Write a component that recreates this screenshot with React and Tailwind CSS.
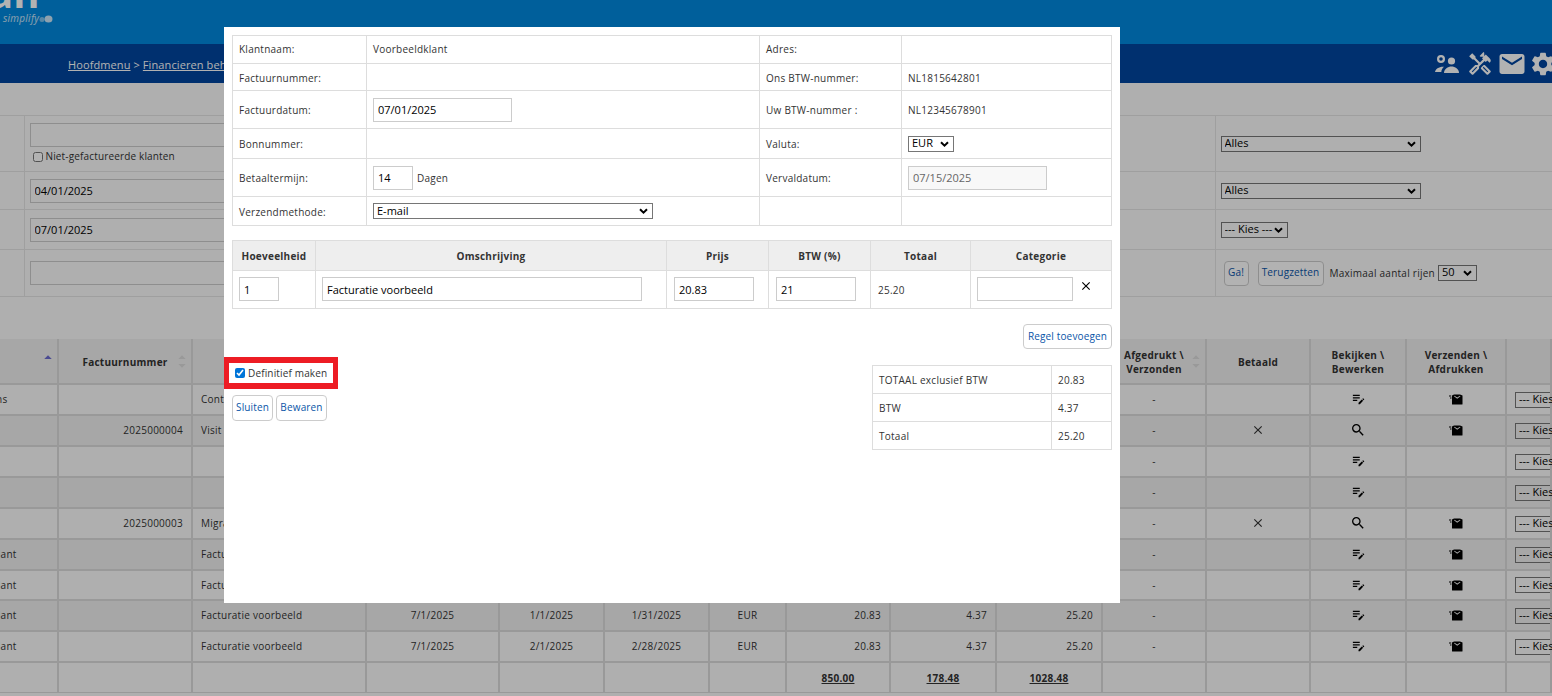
import React from 'react';
import { MdOutlineHandyman, MdEmail, MdSettings, MdEditNote, MdSearch, MdClose, MdArrowDropUp, MdArrowDropDown } from 'react-icons/md';

const font = { fontFamily: '"Open Sans", sans-serif' };

const rows = [
  { klant: 'Klant Jansens', nr: '', oms: 'Contract maart', d1: '7/1/2025', d2: '3/1/2025', d3: '3/31/2025', ex: '20.83', btw: '4.37', tot: '25.20', paid: false, view: 'edit', mail: true },
  { klant: '', nr: '2025000004', oms: 'Visit rapport', d1: '7/1/2025', d2: '6/1/2025', d3: '6/30/2025', ex: '100.00', btw: '21.00', tot: '121.00', paid: true, view: 'search', mail: true },
  { klant: '', nr: '', oms: '', d1: '', d2: '', d3: '', ex: '', btw: '', tot: '', paid: false, view: 'edit', mail: false },
  { klant: '', nr: '', oms: '', d1: '', d2: '', d3: '', ex: '', btw: '', tot: '', paid: false, view: 'edit', mail: false },
  { klant: '', nr: '2025000003', oms: 'Migratie', d1: '7/1/2025', d2: '5/1/2025', d3: '5/31/2025', ex: '100.00', btw: '21.00', tot: '121.00', paid: true, view: 'search', mail: true },
  { klant: 'Voorbeeldklant', nr: '', oms: 'Facturatie voorbeeld', d1: '7/1/2025', d2: '11/1/2024', d3: '11/30/2024', ex: '20.83', btw: '4.37', tot: '25.20', paid: false, view: 'edit', mail: true },
  { klant: 'Voorbeeldklant', nr: '', oms: 'Facturatie voorbeeld', d1: '7/1/2025', d2: '12/1/2024', d3: '12/31/2024', ex: '20.83', btw: '4.37', tot: '25.20', paid: false, view: 'edit', mail: true },
  { klant: 'Voorbeeldklant', nr: '', oms: 'Facturatie voorbeeld', d1: '7/1/2025', d2: '1/1/2025', d3: '1/31/2025', ex: '20.83', btw: '4.37', tot: '25.20', paid: false, view: 'edit', mail: true },
  { klant: 'Voorbeeldklant', nr: '', oms: 'Facturatie voorbeeld', d1: '7/1/2025', d2: '2/1/2025', d3: '2/28/2025', ex: '20.83', btw: '4.37', tot: '25.20', paid: false, view: 'edit', mail: true },
];

const UsersIcon = () => (
  <svg width="26" height="20" viewBox="0 0 26 20" fill="currentColor">
    <path fillRule="evenodd" d="M7 1a4 4 0 1 1 0 8 4 4 0 0 1 0-8zm0 2.200a1.800 1.800 0 1 0 0 3.600 1.800 1.800 0 0 0 0-3.600z" />
    <circle cx="17.500" cy="7" r="3.600" />
    <path d="M10 19c0-4 4-6.500 7.500-6.500S25 15 25 19H10z" />
    <path d="M1 18c.5-3 4-5.500 9-5.200-1.500 1-2.500 3-2.700 5.200H1z" />
  </svg>
);

const MailOpenIcon = () => (
  <svg width="14" height="11" viewBox="0 0 14 11" fill="currentColor">
    <path d="M3 1.500 5 .5h6l2.500 1v8.500a.5.500 0 0 1-.5.500H3.500a.5.500 0 0 1-.5-.500V1.500zm2 .8 3.200 2.400 3.300-2.400-.6-.6-2.700 1.800-2.600-1.800-.6.600z" />
    <rect x="0" y="1.500" width="2.200" height="1" />
    <rect x="1" y="3.500" width="1.500" height="1" />
  </svg>
);

const Bubbles = () => (
  <svg width="14" height="8" viewBox="0 0 14 8" fill="currentColor" className="mt-[2px]">
    <circle cx="3" cy="4.500" r="2.500" fillOpacity="0.6" />
    <ellipse cx="9.500" cy="4" rx="4" ry="3.500" />
  </svg>
);

const Sort = ({ active }) => (
  <span className="absolute right-0 top-1/2 flex -translate-y-1/2 flex-col pt-[1px] text-[#dcdcdc]">
    <MdArrowDropUp size={18} className={active ? 'text-[#6c6cd0] -mb-[10px]' : '-mb-[10px]'} />
    {!active && <MdArrowDropDown size={18} />}
    {active && <span className="h-[18px]" />}
  </span>
);

const Input = ({ value, className = 'text-black', readOnly = false }) => (
  <input
    defaultValue={value}
    readOnly={readOnly}
    className={`h-[24px] border border-[#ccc] px-[4px] text-[11px] tracking-normal ${className}`}
  />
);

// native select, chevron drawn so the text can sit a little higher
const Sel = ({ children, className = '' }) => (
  <div className={`flex h-[16px] items-center overflow-hidden border border-[#767676] ${className}`}>
    <select className="-mt-[2px] h-[15px] w-full appearance-none bg-transparent pl-[3px] text-[11px] tracking-normal text-black">
      <option>{children}</option>
    </select>
    <svg width="9" height="6" viewBox="0 0 9 6" className="pointer-events-none mr-[4px] -ml-[13px] shrink-0 text-black">
      <path d="M1 1.200 4.500 4.600 8 1.200" fill="none" stroke="currentColor" strokeWidth="2" />
    </svg>
  </div>
);

const Btn = ({ children, className = '' }) => (
  <button className={`rounded-[4px] border border-[#ccc] bg-white px-[3px] pb-[1px] text-[10px] tracking-[0.15px] text-[#0a55a8] ${className}`}>
    {children}
  </button>
);

const cell = 'border border-[#ddd] px-[6px] align-middle';
const labelTd = `${cell} pt-[2px]`;
const headTd = 'border-x-2 border-[#dcdcdc] pt-[2px]';
const dataTd = 'border border-[#ddd]';

export default function App() {
  return (
    <div style={font} className="relative h-[696px] w-[1552px] overflow-hidden bg-[#fbfbfb] text-[10px] tracking-[0.25px] text-[#333]">
      {/* header */}
      <div className="h-[44px] overflow-hidden bg-[#0089df]">
        <div className="-mt-[27px] -ml-[11px] text-[40px] leading-[40px] font-bold tracking-normal text-white">an</div>
        <div className="-mt-[1px] ml-[3px] flex items-center text-[10px] leading-[12px] text-white/80 italic">
          simplify
          <Bubbles />
        </div>
      </div>
      <div className="flex h-[39px] items-center justify-between bg-[#0045a0] pl-[68px] text-white">
        <div className="pt-[3px] text-[11px] tracking-[0.1px]">
          <span className="underline">Hoofdmenu</span> &gt; <span className="underline">Financieren beheren</span>
        </div>
        <div className="-mr-[5px] flex items-center">
          <UsersIcon />
          <MdOutlineHandyman size={26} className="ml-[7px]" />
          <MdEmail size={30} className="ml-[4px]" />
          <MdSettings size={28} className="ml-[2px]" />
        </div>
      </div>

      {/* filters */}
      <table className="mt-[32px] w-full table-fixed border-collapse text-[10px]">
        <colgroup>
          <col className="w-[24px]" />
          <col className="w-[1191px]" />
          <col />
        </colgroup>
        <tbody>
          <tr className="h-[56px] border-y border-[#e4e4e4]">
            <td className="border-r border-[#e4e4e4]" />
            <td className="border-r border-[#e4e4e4] px-[5px] pt-[7px] align-top">
              <Input value="" className="block w-[300px]" />
              <label className="mt-[2px] flex items-center gap-[3px] pl-[3px] tracking-[0.15px]">
                <input type="checkbox" className="h-[10px] w-[10px]" />
                Niet-gefactureerde klanten
              </label>
            </td>
            <td className="px-[5px]"><Sel className="w-[200px]">Alles</Sel></td>
          </tr>
          <tr className="h-[38px] border-b border-[#e4e4e4]">
            <td className="border-r border-[#e4e4e4]" />
            <td className="border-r border-[#e4e4e4] px-[5px]"><Input value="04/01/2025" className="block w-[300px] text-black" /></td>
            <td className="px-[5px]"><Sel className="w-[200px]">Alles</Sel></td>
          </tr>
          <tr className="h-[40px] border-b border-[#e4e4e4]">
            <td className="border-r border-[#e4e4e4]" />
            <td className="border-r border-[#e4e4e4] px-[5px]"><Input value="07/01/2025" className="block w-[300px] text-black" /></td>
            <td className="px-[5px]"><Sel className="w-[67px]">--- Kies ---</Sel></td>
          </tr>
          <tr className="h-[47px] border-b border-[#e4e4e4]">
            <td className="border-r border-[#e4e4e4]" />
            <td className="border-r border-[#e4e4e4] px-[5px]"><Input value="" className="block w-[300px]" /></td>
            <td className="pl-[8px]">
              <div className="flex items-center">
                <Btn className="h-[25px] w-[25px] bg-transparent">Ga!</Btn>
                <Btn className="ml-[9px] h-[25px] w-[66px] bg-transparent">Terugzetten</Btn>
                <span className="ml-[6px]">Maximaal aantal rijen</span>
                <Sel className="-mt-[1px] ml-[3px] w-[39px]">50</Sel>
              </div>
            </td>
          </tr>
        </tbody>
      </table>

      {/* results, scrolled a bit to the right */}
      <div className="mt-[42px] overflow-hidden">
        <table className="-ml-[101px] w-[1653px] table-fixed border-collapse text-[10px]">
          <colgroup>
            {[158, 134, 174, 133, 105, 105, 77, 104, 106, 106, 104, 104, 96, 100].map((w, i) => (
              <col key={i} style={{ width: w }} />
            ))}
            <col />
          </colgroup>
          <thead>
            <tr className="h-[45px] border-b-2 border-b-black bg-[#f0f0f0] text-center font-bold">
              <th className={`relative ${headTd}`}><Sort active /></th>
              <th className={`relative ${headTd}`}>Factuurnummer<Sort /></th>
              {['Omschrijving', 'Factuurdatum', 'Van', 'Tot', 'Valuta', 'Excl.', 'BTW', 'Totaal'].map((h) => (
                <th key={h} className={headTd}>{h}</th>
              ))}
              <th className={`relative leading-[14px] ${headTd}`}>Afgedrukt \<br />Verzonden<Sort /></th>
              <th className={headTd}>Betaald</th>
              <th className={`leading-[14px] ${headTd}`}>Bekijken \<br />Bewerken</th>
              <th className={`leading-[14px] ${headTd}`}>Verzenden \<br />Afdrukken</th>
              <th className={headTd} />
            </tr>
          </thead>
          <tbody>
            {rows.map((r, i) => (
              <tr key={i} className={`${i === 6 ? 'h-[30px]' : 'h-[31px]'} ${i % 2 ? 'bg-[#f0f0f0]' : 'bg-[#fbfbfb]'}`}>
                <td className="border-2 border-[#dcdcdc] pl-[41px] whitespace-nowrap">{r.klant}</td>
                <td className="border-2 border-[#dcdcdc] px-[8px] text-right">{r.nr}</td>
                <td className="border-2 border-[#dcdcdc] px-[8px] whitespace-nowrap">{r.oms}</td>
                <td className="border-2 border-[#dcdcdc] text-center">{r.d1}</td>
                <td className="border-2 border-[#dcdcdc] text-center">{r.d2}</td>
                <td className="border-2 border-[#dcdcdc] text-center">{r.d3}</td>
                <td className="border-2 border-[#dcdcdc] text-center">{r.ex && 'EUR'}</td>
                <td className="border-2 border-[#dcdcdc] px-[8px] text-right">{r.ex}</td>
                <td className="border-2 border-[#dcdcdc] px-[8px] text-right">{r.btw}</td>
                <td className="border-2 border-[#dcdcdc] px-[8px] text-right">{r.tot}</td>
                <td className="border-2 border-[#dcdcdc] text-center">-</td>
                <td className="border-2 border-[#dcdcdc]">{r.paid && <MdClose size={14} className="mx-auto -translate-y-[1px]" />}</td>
                <td className="border-2 border-[#dcdcdc]">
                  {r.view === 'edit'
                    ? <MdEditNote size={15} className="mx-auto -translate-y-[1px] text-black" />
                    : <MdSearch size={16} className="mx-auto -translate-y-[1px] text-black" />}
                </td>
                <td className="border-2 border-[#dcdcdc] text-black">
                  {r.mail && <div className="flex justify-center"><MailOpenIcon /></div>}
                </td>
                <td className="border-2 border-[#dcdcdc] pl-[8px] whitespace-nowrap"><Sel className="w-[67px]">--- Kies ---</Sel></td>
              </tr>
            ))}
            <tr className="h-[30px] border-t-2 border-b border-t-black border-b-[#dcdcdc] text-center font-bold">
              {Array.from({ length: 15 }).map((_, i) => {
                const totals = { 7: '850.00', 8: '178.48', 9: '1028.48' };
                return (
                  <td key={i} className="border-x-2 border-[#dcdcdc] pt-[3px] underline">{totals[i]}</td>
                );
              })}
            </tr>
          </tbody>
        </table>
      </div>

      {/* dim layer */}
      <div className="absolute inset-0 bg-black/30" />

      {/* invoice dialog */}
      <div className="absolute top-[27px] left-[224px] h-[576px] w-[896px] bg-white p-[8px]">
        <table className="w-[880px] table-fixed border-collapse">
          <colgroup>
            <col className="w-[134px]" />
            <col className="w-[393px]" />
            <col className="w-[142px]" />
            <col />
          </colgroup>
          <tbody>
            <tr className="h-[28px]">
              <td className={cell}>Klantnaam:</td>
              <td className={cell}>Voorbeeldklant</td>
              <td className={cell}>Adres:</td>
              <td className={cell} />
            </tr>
            <tr className="h-[27px]">
              <td className={labelTd}>Factuurnummer:</td>
              <td className={labelTd} />
              <td className={labelTd}>Ons BTW-nummer:</td>
              <td className={labelTd}>NL1815642801</td>
            </tr>
            <tr className="h-[38px]">
              <td className={labelTd}>Factuurdatum:</td>
              <td className={cell}><Input value="07/01/2025" className="block w-[139px] text-black" /></td>
              <td className={labelTd}>Uw BTW-nummer :</td>
              <td className={labelTd}>NL12345678901</td>
            </tr>
            <tr className="h-[30px]">
              <td className={labelTd}>Bonnummer:</td>
              <td className={labelTd} />
              <td className={labelTd}>Valuta:</td>
              <td className={cell}><Sel className="w-[46px]">EUR</Sel></td>
            </tr>
            <tr className="h-[38px]">
              <td className={labelTd}>Betaaltermijn:</td>
              <td className={cell}>
                <div className="flex items-center gap-[4px]">
                  <Input value="14" className="w-[40px] text-black" />
                  <span className="pt-[1px]">Dagen</span>
                </div>
              </td>
              <td className={labelTd}>Vervaldatum:</td>
              <td className={cell}><Input value="07/15/2025" readOnly className="block w-[139px] bg-[#f8f8f8] text-[#666]" /></td>
            </tr>
            <tr className="h-[29px]">
              <td className={labelTd}>Verzendmethode:</td>
              <td className={cell}><Sel className="w-[280px]">E-mail</Sel></td>
              <td className={labelTd} />
              <td className={labelTd} />
            </tr>
          </tbody>
        </table>

        <table className="mt-[14px] w-[880px] table-fixed border-collapse">
          <colgroup>
            {[83, 351, 102, 102, 100].map((w, i) => (
              <col key={i} style={{ width: w }} />
            ))}
            <col />
          </colgroup>
          <thead>
            <tr className="h-[30px] bg-[#eee] text-center font-bold">
              {['Hoeveelheid', 'Omschrijving', 'Prijs', 'BTW (%)', 'Totaal', 'Categorie'].map((h) => (
                <th key={h} className={`${dataTd} pt-[2px]`}>{h}</th>
              ))}
            </tr>
          </thead>
          <tbody>
            <tr className="h-[38px]">
              <td className={`${dataTd} px-[6px] pb-[1px]`}><Input value="1" className="block w-[40px] text-black" /></td>
              <td className={`${dataTd} px-[6px] pb-[1px]`}><Input value="Facturatie voorbeeld" className="block w-[320px] text-black" /></td>
              <td className={`${dataTd} px-[7px] pb-[1px]`}><Input value="20.83" className="block w-[80px] text-black" /></td>
              <td className={`${dataTd} px-[7px] pb-[1px]`}><Input value="21" className="block w-[80px] text-black" /></td>
              <td className={`${dataTd} px-[7px] pt-[1px]`}>25.20</td>
              <td className={`${dataTd} px-[6px] pb-[1px]`}>
                <div className="flex items-center">
                  <Input value="" className="w-[96px]" />
                  <MdClose size={14} className="-mt-[6px] ml-[6px] text-black" />
                </div>
              </td>
            </tr>
          </tbody>
        </table>

        <div className="mt-[15px] flex justify-end">
          <Btn className="h-[25px] w-[89px]">Regel toevoegen</Btn>
        </div>

        <div className="mt-[8px] flex items-start justify-between">
          <div>
            <label className="-ml-[8px] flex h-[32px] w-[114px] items-center gap-[3px] border-x-[5px] border-y-[6px] border-[#ed1c24] pl-[6px] tracking-[0.15px]">
              <input type="checkbox" defaultChecked className="h-[10px] w-[10px] accent-[#0075d8]" />
              Definitief maken
            </label>
            <div className="mt-[6px] flex gap-[3px]">
              <Btn className="h-[26px] w-[41px]">Sluiten</Btn>
              <Btn className="h-[26px] w-[51px]">Bewaren</Btn>
            </div>
          </div>
          <table className="mt-[8px] w-[240px] table-fixed border-collapse">
            <colgroup>
              <col className="w-[179px]" />
              <col />
            </colgroup>
            <tbody>
              <tr className="h-[28px]"><td className={labelTd}>TOTAAL exclusief BTW</td><td className={labelTd}>20.83</td></tr>
              <tr className="h-[28px]"><td className={labelTd}>BTW</td><td className={labelTd}>4.37</td></tr>
              <tr className="h-[28px]"><td className={labelTd}>Totaal</td><td className={labelTd}>25.20</td></tr>
            </tbody>
          </table>
        </div>
      </div>
    </div>
  );
}
